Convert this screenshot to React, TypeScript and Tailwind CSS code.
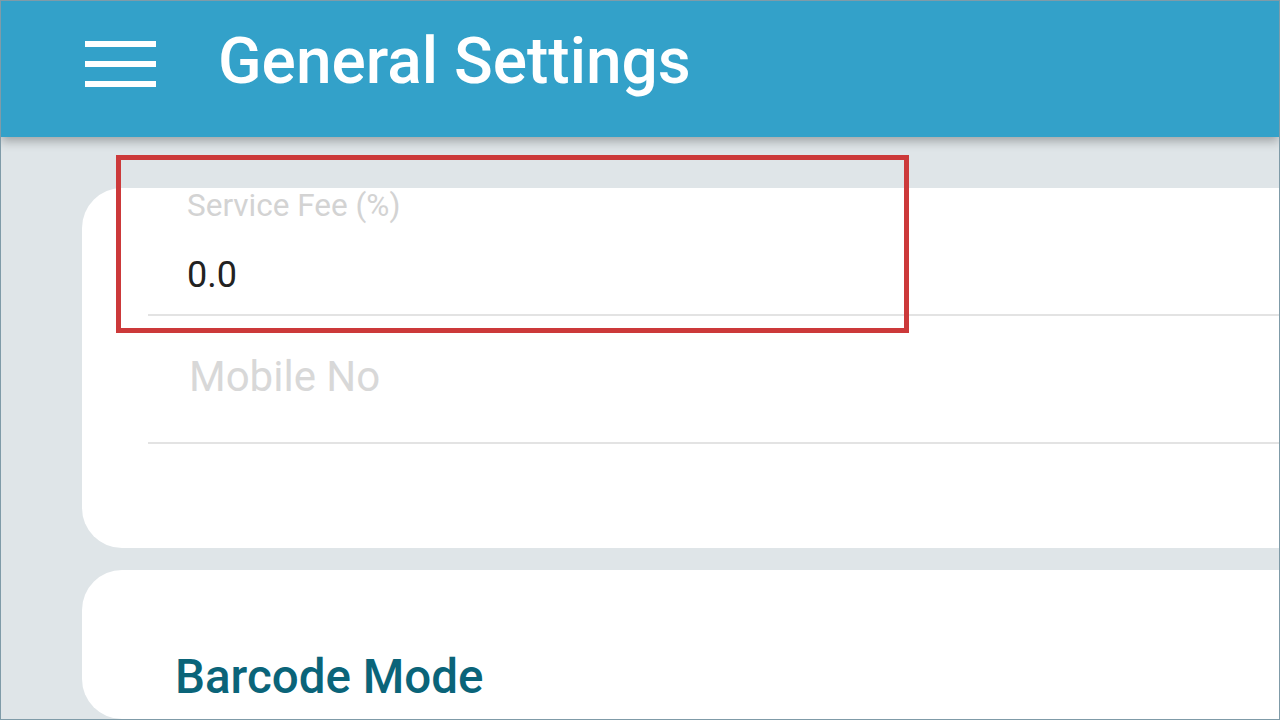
import React from "react";

export default function App() {
  return (
    <div
      className="w-[1280px] h-[720px] overflow-hidden relative bg-[#dfe5e8] border border-[#7f9ba8] flex flex-col"
      style={{ fontFamily: "Roboto, 'Noto Sans', sans-serif" }}
    >
      <header className="h-[136px] shrink-0 bg-[#33a1c9] flex items-center pl-[84px] shadow-[0_4px_10px_rgba(0,0,0,0.3)] z-10">
        <div className="flex flex-col gap-[13.5px] w-[71px] mb-[10px]">
          <div className="h-[6.5px] bg-white" />
          <div className="h-[6.5px] bg-white" />
          <div className="h-[6.5px] bg-white" />
        </div>
        <h1 className="ml-[62px] text-white text-[64px] font-medium leading-none mb-[14px]">
          General Settings
        </h1>
      </header>

      <div className="flex-1 pl-[81px] pt-[51px] flex flex-col gap-[22px]">
        <div className="bg-white rounded-l-[40px] h-[360px] pl-[66px] relative">
          <div className="h-[128px] border-b-2 border-[#e3e3e3] relative">
            <div className="absolute left-[39px] top-[2px] text-[31.5px] text-[#d3d3d3] leading-none">
              Service Fee (%)
            </div>
            <div className="absolute left-[39px] top-[69px] text-[36px] text-[#222] leading-none">
              0.0
            </div>
          </div>
          <div className="h-[128px] border-b-2 border-[#e3e3e3] relative">
            <div className="absolute left-[41px] top-[40px] text-[42px] text-[#d8d8d8] leading-none">
              Mobile No
            </div>
          </div>
        </div>

        <div className="bg-white rounded-l-[40px] flex-1 pl-[93px] pt-[84px]">
          <div className="text-[47.5px] font-medium text-[#0a6479] leading-none">Barcode Mode</div>
        </div>
      </div>

      <div className="absolute left-[115px] top-[154px] w-[793px] h-[178px] border-[5px] border-[#cc393a] pointer-events-none" />
    </div>
  );
}
